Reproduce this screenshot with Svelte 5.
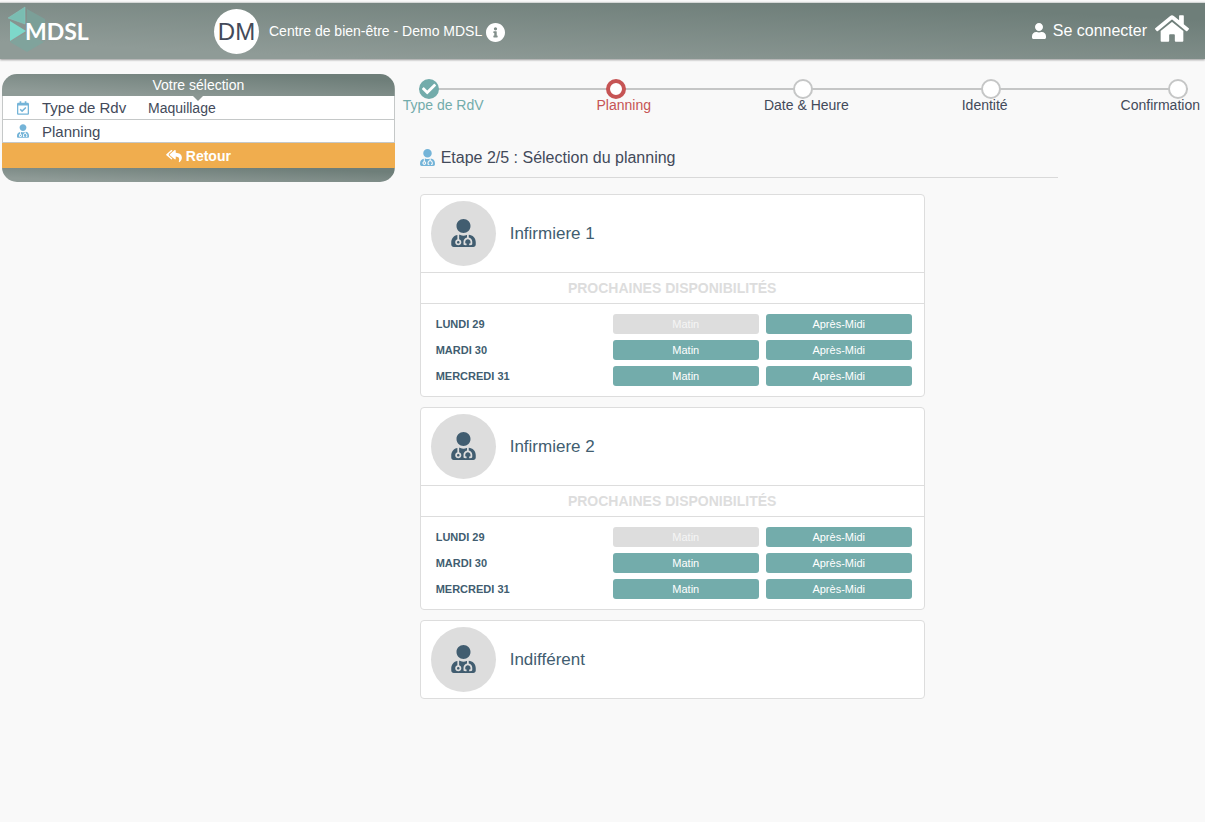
<script>
  const icons = {
    doctor: {
      box: '0 0 448 512',
      path: 'M224 256c70.7 0 128-57.3 128-128S294.7 0 224 0 96 57.3 96 128s57.3 128 128 128zM104 424c0 13.3 10.7 24 24 24s24-10.7 24-24-10.7-24-24-24-24 10.7-24 24zm216-135.4v49c36.5 7.4 64 39.8 64 78.4v41.7c0 7.6-5.4 14.2-12.9 15.7l-32.2 6.4c-4.3.9-8.5-1.9-9.4-6.3l-3.1-15.7c-.9-4.3 1.9-8.6 6.3-9.4l19.3-3.9V416c0-62.8-96-65.1-96 1.9v26.7l19.3 3.9c4.3.9 7.1 5.1 6.3 9.4l-3.1 15.7c-.9 4.3-5.1 7.1-9.4 6.3l-31.2-4.2c-7.9-1.1-13.8-7.8-13.8-15.9V416c0-38.6 27.5-70.9 64-78.4v-45.2c-2.2.7-4.4 1.1-6.6 1.9-18 6.3-37.3 9.8-57.4 9.8s-39.4-3.5-57.4-9.8c-7.4-2.6-14.9-4.2-22.6-5.2v81.6c23.1 6.9 40 28.1 40 53.4 0 30.9-25.1 56-56 56s-56-25.1-56-56c0-25.3 16.9-46.5 40-53.4v-80.4C48.5 301 0 355.8 0 422.4v44.8C0 491.9 20.1 512 44.8 512h358.4c24.7 0 44.8-20.1 44.8-44.8v-44.8c0-72-56.8-130.3-128-133.8z'
    },
    calendar: {
      box: '0 0 448 512',
      path: 'M400 64h-48V12c0-6.627-5.373-12-12-12h-40c-6.627 0-12 5.373-12 12v52H160V12c0-6.627-5.373-12-12-12h-40c-6.627 0-12 5.373-12 12v52H48C21.49 64 0 85.49 0 112v352c0 26.51 21.49 48 48 48h352c26.51 0 48-21.49 48-48V112c0-26.51-21.49-48-48-48zm-6 400H54a6 6 0 0 1-6-6V160h352v298a6 6 0 0 1-6 6zm-52.849-200.65L198.842 404.519c-4.705 4.667-12.303 4.637-16.971-.068l-75.091-75.699c-4.667-4.705-4.637-12.303.068-16.971l22.719-22.536c4.705-4.667 12.303-4.637 16.97.069l44.104 44.461 111.072-110.181c4.705-4.667 12.303-4.637 16.971.068l22.536 22.718c4.667 4.705 4.636 12.303-.069 16.97z'
    },
    reply: {
      box: '0 0 576 512',
      path: 'M136.309 189.836L312.313 37.851C327.72 24.546 352 35.348 352 56.015v82.763c129.182 10.231 224 52.212 224 183.548 0 61.441-39.582 122.309-83.333 154.132-13.653 9.931-33.111-2.533-28.077-18.631 38.512-123.162-3.922-169.482-112.59-182.015v84.175c0 20.701-24.3 31.453-39.687 18.164L136.309 226.164c-11.071-9.561-11.086-26.753 0-36.328zm-128 36.328L184.313 378.15C199.7 391.439 224 380.687 224 359.986v-15.818l-108.606-93.785A55.96 55.96 0 0 1 96 207.998a55.953 55.953 0 0 1 19.393-42.38L224 71.832V56.015c0-20.667-24.28-31.469-39.687-18.164L8.309 189.836c-11.086 9.575-11.071 26.767 0 36.328z'
    },
    info: {
      box: '8 8 496 496',
      path: 'M256 8C119.043 8 8 119.083 8 256c0 136.997 111.043 248 248 248s248-111.003 248-248C504 119.083 392.957 8 256 8zm0 110c23.196 0 42 18.804 42 42s-18.804 42-42 42-42-18.804-42-42 18.804-42 42-42zm56 254c0 6.627-5.373 12-12 12h-88c-6.627 0-12-5.373-12-12v-24c0-6.627 5.373-12 12-12h12v-64h-12c-6.627 0-12-5.373-12-12v-24c0-6.627 5.373-12 12-12h64c6.627 0 12 5.373 12 12v100h12c6.627 0 12 5.373 12 12v24z'
    },
    user: {
      box: '0 0 448 512',
      path: 'M224 256c70.7 0 128-57.3 128-128S294.7 0 224 0 96 57.3 96 128s57.3 128 128 128zm89.6 32h-16.7c-22.2 10.2-46.9 16-72.9 16s-50.6-5.8-72.9-16h-16.7C60.2 288 0 348.2 0 422.4V464c0 26.5 21.5 48 48 48h352c26.5 0 48-21.5 48-48v-41.6c0-74.2-60.2-134.4-134.4-134.4z'
    },
    home: {
      box: '0 32 576 448',
      path: 'M280.37 148.26L96 300.11V464a16 16 0 0 0 16 16l112.06-.29a16 16 0 0 0 15.92-16V368a16 16 0 0 1 16-16h64a16 16 0 0 1 16 16v95.64a16 16 0 0 0 16 16.05L464 480a16 16 0 0 0 16-16V300L295.67 148.26a12.19 12.19 0 0 0-15.3 0zM571.6 251.47L488 182.56V44.05a12 12 0 0 0-12-12h-56a12 12 0 0 0-12 12v72.61L318.47 43a48 48 0 0 0-61 0L4.34 251.47a12 12 0 0 0-1.6 16.9l25.5 31A12 12 0 0 0 45.15 301l235.22-193.74a12.19 12.19 0 0 1 15.3 0L530.9 301a12 12 0 0 0 16.9-1.6l25.5-31a12 12 0 0 0-1.7-16.93z'
    },
    check: {
      box: '0 0 512 512',
      path: 'M173.898 439.404l-166.4-166.4c-9.997-9.997-9.997-26.206 0-36.204l36.203-36.204c9.997-9.998 26.207-9.998 36.204 0L192 312.69 432.095 72.596c9.997-9.997 26.207-9.997 36.204 0l36.203 36.204c9.997 9.997 9.997 26.206 0 36.204l-294.4 294.401c-9.998 9.997-26.207 9.997-36.204-.001z'
    }
  };

  const steps = [
    { name: 'Type de RdV', state: 'done' },
    { name: 'Planning', state: 'current' },
    { name: 'Date & Heure', state: 'todo' },
    { name: 'Identité', state: 'todo' },
    { name: 'Confirmation', state: 'todo' }
  ];

  const days = [
    { name: 'Lundi 29', morning: false, afternoon: true },
    { name: 'Mardi 30', morning: true, afternoon: true },
    { name: 'Mercredi 31', morning: true, afternoon: true }
  ];

  const plannings = [
    { name: 'Infirmiere 1', days },
    { name: 'Infirmiere 2', days },
    { name: 'Indifférent', days: [] }
  ];
</script>

{#snippet icon(name)}
  <svg class="icon {name}" viewBox={icons[name].box} aria-hidden="true"><path d={icons[name].path} /></svg>
{/snippet}

<header>
  <a class="logo" href="#mdsl">
    <svg viewBox="0 0 37 46" aria-hidden="true">
      <path d="M19 3 37 13V35L19 26Z" fill="#7b9f98" />
      <path d="M2 36 18 27 36 36 19 46Z" fill="#80a39c" />
      <path d="M0 12 17 1V18Z" fill="#7abdb2" stroke="#86cbc0" stroke-width=".5" />
      <path d="M2 15 18 25 2 35Z" fill="#7dd8ca" />
    </svg>
    <span>MDSL</span>
  </a>
  <div class="center">
    <span class="avatar">DM</span>
    <span>Centre de bien-être - Demo MDSL</span>
    <button class="info-button" aria-label="Informations">{@render icon('info')}</button>
  </div>
  <nav>
    <a href="#login">{@render icon('user')} Se connecter</a>
    <a class="home-link" href="#home" aria-label="Accueil">{@render icon('home')}</a>
  </nav>
</header>

<div class="page">
  <aside>
    <h2>Votre sélection</h2>
    <dl>
      <div class="choice">
        <dt>{@render icon('calendar')} Type de Rdv</dt>
        <dd>Maquillage</dd>
      </div>
      <div class="choice">
        <dt>{@render icon('doctor')} Planning</dt>
        <dd></dd>
      </div>
    </dl>
    <button class="back">{@render icon('reply')} Retour</button>
  </aside>

  <main>
    <div class="track" aria-hidden="true">
      {#each steps as step}
        <span class="dot {step.state}">
          {#if step.state === 'done'}{@render icon('check')}{/if}
        </span>
      {/each}
    </div>
    <ol class="steps">
      {#each steps as step}
        <li class={step.state}>{step.name}</li>
      {/each}
    </ol>

    <section>
      <h1>{@render icon('doctor')} Etape 2/5 : Sélection du planning</h1>

      {#each plannings as planning}
        <article>
          <div class="person">
            <span class="photo">{@render icon('doctor')}</span>
            <h3>{planning.name}</h3>
          </div>
          {#if planning.days.length > 0}
            <h4>Prochaines disponibilités</h4>
            <div class="days">
              {#each planning.days as day}
                <div class="day">
                  <strong>{day.name}</strong>
                  <button disabled={!day.morning}>Matin</button>
                  <button disabled={!day.afternoon}>Après-Midi</button>
                </div>
              {/each}
            </div>
          {/if}
        </article>
      {/each}
    </section>
  </main>
</div>

<style>
  :global(body) {
    margin: 0;
    background: #f9f9f9;
    color: #434a5a;
    font-family: "Liberation Sans", Arial, sans-serif;
    font-size: 14px;
  }
  h1, h2, h3, h4, dl, dd, ol { margin: 0; padding: 0; font-weight: normal; }
  a { color: inherit; text-decoration: none; }
  button {
    border: 0;
    padding: 0;
    background: none;
    color: white;
    font-family: inherit;
    cursor: pointer;
  }
  .icon { fill: currentColor; flex: none; }

  header {
    display: grid;
    grid-template-columns: 214px 1fr auto;
    align-items: center;
    height: 56px;
    margin-top: 2px;
    border-top: 1px solid #d5d8d7;
    background: linear-gradient(to top right, #8f9b97 15%, #6e7e79 85%);
    box-shadow: 0 1px 2px #999;
    color: white;
  }
  .logo {
    display: flex;
    align-items: center;
    padding-left: 8px;
    font-family: Lato, sans-serif;
    font-size: 23px;
    font-weight: bold;
  }
  .logo svg { width: 37px; height: 46px; margin: -4px -20px 0 0; }
  .logo span { position: relative; }
  .center { display: flex; align-items: center; }
  .avatar {
    width: 45px;
    margin-right: 10px;
    border-radius: 50%;
    background: white;
    color: #434a5a;
    font-size: 24px;
    line-height: 45px;
    text-align: center;
  }
  .info-button { display: flex; margin-left: 4px; padding-top: 2px; }
  .info { width: 19px; height: 19px; }
  nav {
    display: flex;
    align-items: center;
    gap: 8px;
    padding-right: 16px;
    font-size: 16px;
  }
  nav a { display: flex; align-items: center; gap: 7px; }
  .user { width: 14px; height: 16px; }
  .home { width: 34px; height: 27px; }
  .home-link { padding-bottom: 6px; }

  .page {
    display: grid;
    grid-template-columns: 1fr 2fr;
    align-items: start;
    padding-top: 15px;
  }
  aside {
    margin: 0 7px 0 2px;
    padding-bottom: 14px;
    border-radius: 15px;
    background:
      linear-gradient(to top right, #8f9b97 15%, #6e7e79 85%) top / 100% 22px no-repeat,
      linear-gradient(to top right, #8f9b97 15%, #6e7e79 85%) bottom / 100% 14px no-repeat;
  }
  aside h2 {
    position: relative;
    color: white;
    font-size: 14px;
    line-height: 22px;
    text-align: center;
  }
  /* small arrow pointing at the first choice */
  aside h2::after {
    content: "";
    position: absolute;
    top: 100%;
    left: 50%;
    margin-left: -5px;
    border: 5px solid transparent;
    border-top-color: #8a9692;
    border-bottom: 0;
  }
  .choice {
    display: flex;
    align-items: center;
    height: 23px;
    border: 1px solid #c5c8c8;
    border-top: 0;
    background: white;
  }
  .choice:last-child { height: 22px; }
  .choice dt {
    display: flex;
    align-items: center;
    width: 131px;
    padding-left: 14px;
    font-size: 15px;
  }
  .choice .icon, h1 .icon { color: #74b4d8; }
  .choice .icon { width: 12px; height: 14px; margin-right: 13px; }
  .back {
    display: flex;
    align-items: center;
    justify-content: center;
    gap: 4px;
    width: 100%;
    height: 25px;
    background: #f0ad4e;
    font-size: 14px;
    font-weight: bold;
  }
  .reply { width: 16px; height: 14px; }

  .track {
    display: flex;
    justify-content: space-between;
    margin: 5px 17px 0;
    background: linear-gradient(#c5c6c6, #c5c6c6) center / 100% 2px no-repeat;
  }
  .dot {
    display: flex;
    align-items: center;
    justify-content: center;
    box-sizing: border-box;
    width: 20px;
    height: 20px;
    border: 2px solid #c5c6c6;
    border-radius: 50%;
    background: white;
  }
  .dot.done { border-color: #73acab; background: #73acab; color: white; }
  .dot.current { border: 4px solid #c65454; }
  .check { width: 14px; height: 14px; }
  .steps {
    display: flex;
    justify-content: space-between;
    margin: 0 5px 0 1px;
    line-height: 12px;
    list-style: none;
  }
  .steps .done { color: #73acab; }
  .steps .current { color: #c65454; }

  section { max-width: 638px; padding: 36px 18px 0; }
  h1 {
    display: flex;
    align-items: center;
    gap: 6px;
    margin-bottom: 16px;
    padding-bottom: 9px;
    border-bottom: 1px solid #d9d9d9;
    font-size: 16px;
    line-height: 21px;
  }
  h1 .icon { width: 15px; height: 17px; }
  article {
    max-width: 503px;
    margin-bottom: 10px;
    border: 1px solid #ddd;
    border-radius: 4px;
    background: white;
    color: #415d70;
  }
  .person {
    display: flex;
    align-items: center;
    gap: 14px;
    height: 77px;
    padding-left: 10px;
  }
  .photo {
    display: flex;
    align-items: center;
    justify-content: center;
    box-sizing: border-box;
    width: 65px;
    height: 65px;
    padding-bottom: 2px;
    border-radius: 50%;
    background: #ddd;
  }
  .photo .icon { width: 25px; height: 28px; }
  h3 { font-size: 17px; }
  h4 {
    border: 1px solid #ddd;
    border-width: 1px 0;
    color: #ddd;
    font-size: 14px;
    font-weight: bold;
    line-height: 30px;
    text-align: center;
    text-transform: uppercase;
  }
  .days {
    display: grid;
    gap: 6px;
    padding: 10px 12px 10px 15px;
  }
  .day {
    display: grid;
    grid-template-columns: 7fr 6fr 6fr;
    gap: 7px;
    font-size: 11px;
    line-height: 20px;
  }
  .day strong { text-transform: uppercase; }
  .day button {
    border-radius: 3px;
    background: #73acab;
    font-size: 11px;
    line-height: 20px;
  }
  .day button:disabled { background: #ddd; color: #f5f5f5; cursor: default; }
</style>
